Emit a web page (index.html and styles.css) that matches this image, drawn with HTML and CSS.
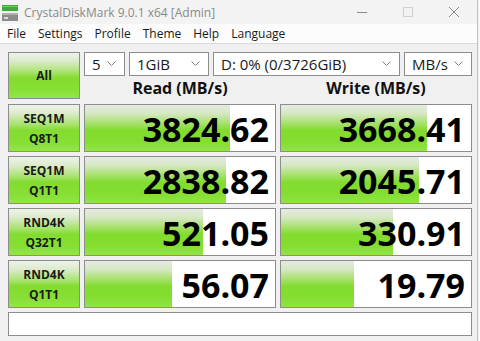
FILE: index.html
```html
<!DOCTYPE html>
<html>
<head>
<meta charset="utf-8">
<link rel="stylesheet" href="styles.css">
</head>
<body>
<div class="window">
  <div class="titlebar">
    <svg class="app-icon" width="16" height="16" viewBox="0 0 16 16">
      <rect x="0" y="0" width="16" height="6" fill="#3faa3c"/>
      <rect x="0" y="1" width="16" height="1" fill="#6fd05a"/>
      <rect x="0" y="8" width="16" height="8" fill="#8c8c8c"/>
      <rect x="0" y="8" width="16" height="2" fill="#b0b0b0"/>
      <rect x="2" y="12" width="4" height="2" fill="#dcdcdc"/>
    </svg>
    <span class="title">CrystalDiskMark 9.0.1 x64 [Admin]</span>
    <div class="controls">
      <svg width="12" height="12" viewBox="0 0 12 12"><line x1="1" y1="6.5" x2="11" y2="6.5" stroke="#8a8a8a" stroke-width="1"/></svg>
      <svg width="12" height="12" viewBox="0 0 12 12"><rect x="1.5" y="1.5" width="9" height="9" fill="none" stroke="#cfcfcf" stroke-width="1"/></svg>
      <svg width="12" height="12" viewBox="0 0 12 12"><path d="M1 1 L11 11 M11 1 L1 11" stroke="#8a8a8a" stroke-width="1"/></svg>
    </div>
  </div>
  <div class="menubar">
    <span>File</span><span>Settings</span><span>Profile</span><span>Theme</span><span>Help</span><span>Language</span>
  </div>
  <div class="content">
    <div class="top">
      <div class="btn all">All</div>
      <div class="top-right">
        <div class="combos">
          <div class="combo c1"><span>5</span><svg class="chev" width="9" height="6" viewBox="0 0 9 6"><path d="M0.5 0.5 L4.5 4.5 L8.5 0.5" fill="none" stroke="#808080"/></svg></div>
          <div class="combo c2"><span>1GiB</span><svg class="chev" width="9" height="6" viewBox="0 0 9 6"><path d="M0.5 0.5 L4.5 4.5 L8.5 0.5" fill="none" stroke="#808080"/></svg></div>
          <div class="combo c3"><span>D: 0% (0/3726GiB)</span><svg class="chev" width="9" height="6" viewBox="0 0 9 6"><path d="M0.5 0.5 L4.5 4.5 L8.5 0.5" fill="none" stroke="#808080"/></svg></div>
          <div class="combo c4"><span>MB/s</span><svg class="chev" width="9" height="6" viewBox="0 0 9 6"><path d="M0.5 0.5 L4.5 4.5 L8.5 0.5" fill="none" stroke="#808080"/></svg></div>
        </div>
        <div class="heads">
          <div class="head">Read (MB/s)</div>
          <div class="head">Write (MB/s)</div>
        </div>
      </div>
    </div>
    <div class="rows">
      <div class="row">
        <div class="btn"><span>SEQ1M</span><span>Q8T1</span></div>
        <div class="cell"><div class="fill" style="width:145px"></div><span class="val">3824.62</span></div>
        <div class="cell"><div class="fill" style="width:146px"></div><span class="val">3668.41</span></div>
      </div>
      <div class="row">
        <div class="btn"><span>SEQ1M</span><span>Q1T1</span></div>
        <div class="cell"><div class="fill" style="width:141px"></div><span class="val">2838.82</span></div>
        <div class="cell"><div class="fill" style="width:138px"></div><span class="val">2045.71</span></div>
      </div>
      <div class="row">
        <div class="btn"><span>RND4K</span><span>Q32T1</span></div>
        <div class="cell"><div class="fill" style="width:118px"></div><span class="val">521.05</span></div>
        <div class="cell"><div class="fill" style="width:112px"></div><span class="val">330.91</span></div>
      </div>
      <div class="row">
        <div class="btn"><span>RND4K</span><span>Q1T1</span></div>
        <div class="cell"><div class="fill" style="width:87px"></div><span class="val">56.07</span></div>
        <div class="cell"><div class="fill" style="width:73px"></div><span class="val">19.79</span></div>
      </div>
    </div>
    <div class="msg"></div>
  </div>
</div>
</body>
</html>
```

FILE: styles.css
```css
html, body {
  margin: 0;
  padding: 0;
  background: #ffffff;
}
body {
  font-family: "Open Sans", "Noto Sans", "Liberation Sans", sans-serif;
  color: #1a1a1a;
  width: 480px;
  height: 341px;
  overflow: hidden;
}
.window {
  width: 477px;
  height: 341px;
  background: #f0f0f0;
  border-right: 1px solid #b9c3cc;
  box-shadow: 1px 0 2px rgba(0,0,0,0.08);
}
.titlebar {
  height: 24px;
  background: #f3f3f3;
  display: flex;
  align-items: center;
}
.app-icon {
  margin-left: 2px;
  margin-top: 1px;
}
.title {
  margin-left: 6px;
  font-size: 12px;
  color: #8a8a8a;
}
.controls {
  margin-left: auto;
  display: flex;
  gap: 34px;
  margin-right: 17px;
}
.menubar {
  height: 19px;
  background: #fcfcfc;
  border-bottom: 1px solid #dadada;
  display: flex;
  align-items: center;
  font-size: 12px;
  color: #1a1a1a;
  padding-left: 1px;
}
.menubar span {
  padding: 0 6px 0 6px;
}
.menubar span:first-child {
  padding-left: 6px;
}
.content {
  padding: 8px 0 0 8px;
}
.top {
  display: flex;
  height: 52px;
  gap: 4px;
}
.btn {
  box-sizing: border-box;
  width: 72px;
  border: 1px solid #8d8d8d;
  background: linear-gradient(to bottom, #eef2ea 0%, #dcebcc 18%, #a9e36f 42%, #84dc30 55%, #86df33 80%, #93e548 100%);
  display: flex;
  flex-direction: column;
  align-items: center;
  justify-content: center;
  font-weight: 700;
  font-size: 12px;
  line-height: 20px;
  color: #1a1a1a;
}
.btn.all {
  height: 47px;
  width: 72px;
  padding-top: 1px;
}
.top-right {
  display: flex;
  flex-direction: column;
  width: 388px;
}
.combos {
  display: flex;
  gap: 4px;
  height: 24px;
}
.combo {
  box-sizing: border-box;
  height: 24px;
  background: #ffffff;
  border: 1px solid #8d8d8d;
  display: flex;
  align-items: center;
  padding: 0 8px 0 7px;
  font-size: 15px;
  color: #1a1a1a;
}
.combo .chev {
  margin-left: auto;
}
.c1 { width: 41px; }
.c2 { width: 80px; }
.c3 { width: 187px; }
.c4 { width: 68px; }
.heads {
  display: grid;
  grid-template-columns: 192px 192px;
  column-gap: 4px;
  height: 28px;
}
.head {
  text-align: center;
  font-weight: 700;
  font-size: 16px;
  line-height: 25px;
  color: #111;
}
.rows {
  display: flex;
  flex-direction: column;
  gap: 4px;
}
.row {
  display: grid;
  grid-template-columns: 72px 192px 192px;
  column-gap: 4px;
  height: 48px;
}
.row .btn {
  height: 48px;
  padding-top: 1px;
}
.cell {
  position: relative;
  box-sizing: border-box;
  height: 48px;
  background: #ffffff;
  border: 1px solid #8d8d8d;
  display: flex;
  align-items: center;
  justify-content: flex-end;
  padding-right: 6px;
  overflow: hidden;
}
.fill {
  position: absolute;
  left: 0;
  top: 0;
  bottom: 0;
  background: linear-gradient(to bottom, #e6eae2 0%, #d6e8c4 18%, #a6e16a 40%, #82dc2e 55%, #84de30 80%, #90e444 100%);
}
.val {
  position: relative;
  font-weight: 700;
  font-size: 34px;
  line-height: 46px;
  color: #000;
  margin-top: 1px;
}
.msg {
  box-sizing: border-box;
  margin-top: 4px;
  width: 464px;
  height: 24px;
  background: #ffffff;
  border: 1px solid #8d8d8d;
}
```
